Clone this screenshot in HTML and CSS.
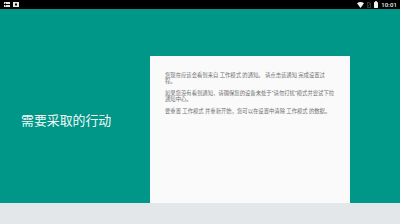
FILE: index.html
```html
<!DOCTYPE html>
<html lang="zh-CN">
<head>
<meta charset="utf-8">
<link rel="stylesheet" href="styles.css">
</head>
<body>
<div class="screen">
  <div class="status">
    <div class="status-left">
      <svg class="ic" width="6" height="5" viewBox="0 0 6 5"><rect x="0" y="0" width="6" height="5" fill="#e8e8e8"/><rect x="0" y="2" width="6" height="1" fill="#000"/><rect x="1" y="0.8" width="1" height="0.8" fill="#000"/><rect x="1" y="3.4" width="1" height="0.8" fill="#000"/></svg>
      <svg class="ic" width="6" height="5" viewBox="0 0 6 5"><rect x="0" y="0" width="6" height="5" fill="#e8e8e8"/><rect x="2" y="1.5" width="2" height="2" fill="#000"/></svg>
    </div>
    <div class="status-right">
      <svg class="ic" width="7" height="6" viewBox="0 0 7 6"><path d="M0 1.2 Q3.5 -1 7 1.2 L3.5 6 Z" fill="#f2f2f2"/></svg>
      <svg class="ic" width="4" height="6" viewBox="0 0 4 6"><path d="M0.4 0.4 H2.6 L3.6 1.4 V5.6 H0.4 Z" fill="none" stroke="#555" stroke-width="0.7"/><path d="M0.8 5 L3.2 1" stroke="#555" stroke-width="0.6"/></svg>
      <svg class="ic" width="4" height="7" viewBox="0 0 4 7"><rect x="1.2" y="0" width="1.6" height="1" fill="#f2f2f2"/><rect x="0" y="1" width="4" height="6" rx="0.4" fill="#f2f2f2"/></svg>
      <span class="time">10:01</span>
    </div>
  </div>
  <div class="main">
    <div class="side">
      <h1 class="title">需要采取的行动</h1>
    </div>
    <div class="card">
      <div class="card-text">
        <p class="para">您现在应该会看到来自 工作模式 的通知。 请点击该通知 完成设置过程。</p>
        <p class="para">如果您没有看到通知，请确保您的设备未处于“请勿打扰”模式并尝试下拉通知中心。</p>
        <p class="para">要重置 工作模式 并重新开始，您可以在设置中清除 工作模式 的数据。</p>
      </div>
    </div>
  </div>
  <div class="navbar"></div>
</div>
</body>
</html>
```
FILE: styles.css
```css
html, body {
  margin: 0;
  padding: 0;
}
body {
  width: 400px;
  height: 224px;
  overflow: hidden;
  font-family: "Noto Sans CJK SC", "Noto Sans", sans-serif;
}
.screen {
  display: flex;
  flex-direction: column;
  width: 400px;
  height: 224px;
}
.status {
  height: 9px;
  background: #000;
  display: flex;
  align-items: center;
  justify-content: space-between;
  padding: 0 3px 0 4px;
}
.status-left {
  display: flex;
  align-items: center;
  gap: 3px;
}
.status-right {
  display: flex;
  align-items: center;
  gap: 3px;
}
.ic {
  display: block;
}
.time {
  color: #f2f2f2;
  font-family: "Roboto", "Liberation Sans", sans-serif;
  font-size: 6px;
  line-height: 9px;
  font-weight: 500;
  letter-spacing: 0.1px;
}
.main {
  flex: 1;
  display: flex;
  background: #009688;
  min-height: 0;
}
.side {
  width: 150px;
  display: flex;
  flex-direction: column;
  justify-content: center;
  padding: 28px 0 0 21px;
  box-sizing: border-box;
}
.title {
  margin: 0;
  color: #f4faf9;
  font-size: 12.9px;
  font-weight: 400;
  line-height: 16px;
  white-space: nowrap;
}
.card {
  width: 200px;
  margin-top: 47px;
  background: #fafafa;
  padding: 16px 15px 0 15px;
  box-sizing: border-box;
  overflow: hidden;
}
.card-text {
  width: 508px;
  transform: scale(0.33333);
  transform-origin: 0 0;
}
.para {
  margin: 0 0 19px 0;
  color: #6f6f6f;
  font-family: "Roboto", "Noto Sans CJK SC", sans-serif;
  font-size: 16px;
  line-height: 18px;
}
.navbar {
  height: 21px;
  background: #e3e7ea;
}
```
